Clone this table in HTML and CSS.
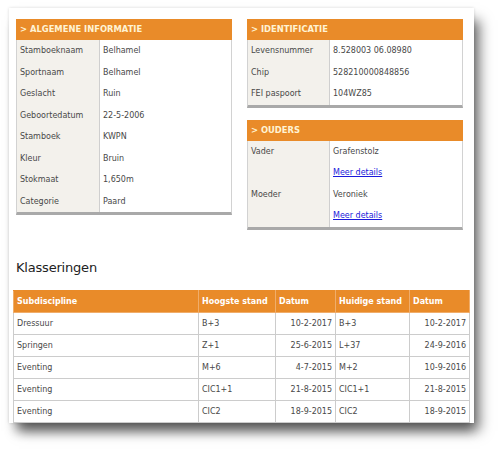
FILE: index.html
```html
<!DOCTYPE html>
<html lang="nl">
<head>
<meta charset="utf-8">
<title>Belhamel</title>
<link rel="stylesheet" href="styles.css">
</head>
<body>
<div class="paper">
  <div class="top">
    <div class="box box-left">
      <div class="box-head">&gt; ALGEMENE INFORMATIE</div>
      <div class="row"><div class="lbl">Stamboeknaam</div><div class="val">Belhamel</div></div>
      <div class="row"><div class="lbl">Sportnaam</div><div class="val">Belhamel</div></div>
      <div class="row"><div class="lbl">Geslacht</div><div class="val">Ruin</div></div>
      <div class="row"><div class="lbl">Geboortedatum</div><div class="val">22-5-2006</div></div>
      <div class="row"><div class="lbl">Stamboek</div><div class="val">KWPN</div></div>
      <div class="row"><div class="lbl">Kleur</div><div class="val">Bruin</div></div>
      <div class="row"><div class="lbl">Stokmaat</div><div class="val">1,650m</div></div>
      <div class="row"><div class="lbl">Categorie</div><div class="val">Paard</div></div>
    </div>
    <div class="col-right">
      <div class="box box-right">
        <div class="box-head">&gt; IDENTIFICATIE</div>
        <div class="row"><div class="lbl">Levensnummer</div><div class="val">8.528003 06.08980</div></div>
        <div class="row"><div class="lbl">Chip</div><div class="val">528210000848856</div></div>
        <div class="row"><div class="lbl">FEI paspoort</div><div class="val">104WZ85</div></div>
      </div>
      <div class="box box-right">
        <div class="box-head">&gt; OUDERS</div>
        <div class="row"><div class="lbl">Vader</div><div class="val"><div>Grafenstolz</div><div><a href="#">Meer details</a></div></div></div>
        <div class="row"><div class="lbl">Moeder</div><div class="val"><div>Veroniek</div><div><a href="#">Meer details</a></div></div></div>
      </div>
    </div>
  </div>
  <h2 class="title">Klasseringen</h2>
  <table class="klas">
    <colgroup>
      <col class="c1"><col class="c2"><col class="c3"><col class="c4"><col class="c5">
    </colgroup>
    <thead>
      <tr><th>Subdiscipline</th><th>Hoogste stand</th><th>Datum</th><th>Huidige stand</th><th>Datum</th></tr>
    </thead>
    <tbody>
      <tr><td>Dressuur</td><td>B+3</td><td class="num">10-2-2017</td><td>B+3</td><td class="num">10-2-2017</td></tr>
      <tr><td>Springen</td><td>Z+1</td><td class="num">25-6-2015</td><td>L+37</td><td class="num">24-9-2016</td></tr>
      <tr><td>Eventing</td><td>M+6</td><td class="num">4-7-2015</td><td>M+2</td><td class="num">10-9-2016</td></tr>
      <tr><td>Eventing</td><td>CIC1+1</td><td class="num">21-8-2015</td><td>CIC1+1</td><td class="num">21-8-2015</td></tr>
      <tr><td>Eventing</td><td>CIC2</td><td class="num">18-9-2015</td><td>CIC2</td><td class="num">18-9-2015</td></tr>
    </tbody>
  </table>
</div>
</body>
</html>
```

FILE: styles.css
```css
html, body {
  margin: 0;
  padding: 0;
  background: #ffffff;
}
body {
  font-family: "DejaVu Sans", Verdana, sans-serif;
  font-size: 8px;
  color: #484848;
  min-height: 451px;
  padding-bottom: 1px;
  box-sizing: border-box;
}
.paper {
  margin: 8px 0 0 9px;
  width: 465px;
  height: 415px;
  box-sizing: border-box;
  padding: 11px 11px 0 7px;
  background: #ffffff;
  box-shadow: 0 0 3px rgba(0,0,0,0.14), 8px 10px 12px -2px rgba(0,0,0,0.5), 2px 12px 10px -4px rgba(0,0,0,0.3);
}
.top {
  display: grid;
  grid-template-columns: 216px 216px;
  column-gap: 15px;
  align-items: start;
}
.col-right {
  display: flex;
  flex-direction: column;
  gap: 12px;
}
.box {
  border-left: 1px solid #d2d2d2;
  border-right: 1px solid #d2d2d2;
  border-bottom: 3px solid #a9a9a9;
  background: #ffffff;
}
.box-head {
  background: #e98b29;
  color: #fff3d4;
  font-weight: bold;
  font-size: 8.4px;
  height: 21px;
  line-height: 21px;
  margin: 0 -1px;
  padding-left: 4px;
}
.row {
  display: grid;
  grid-template-columns: 83px 1fr;
}
.box-right .row {
  grid-template-columns: 82px 1fr;
}
.lbl {
  background: #f3f1ec;
  border-right: 1px solid #cfcfcf;
  padding-left: 3px;
  line-height: 21.5px;
}
.val {
  padding-left: 3px;
  line-height: 21.5px;
}
.val a {
  color: #1a1adb;
  text-decoration: underline;
}
.title {
  margin: 30px 0 14px 0;
  font-size: 13px;
  line-height: 16px;
  font-weight: normal;
  color: #222;
  letter-spacing: -0.2px;
}
.klas {
  margin-left: -3px;
  width: 456px;
  border-collapse: collapse;
  table-layout: fixed;
}
.c1 { width: 185px; }
.c2 { width: 77px; }
.c3 { width: 60px; }
.c4 { width: 74px; }
.c5 { width: 60px; }
.klas th {
  background: #e98b29;
  color: #ffffff;
  font-weight: bold;
  text-align: left;
  height: 21px;
  padding: 0 3px;
  border: 1px solid #f0ad6a;
  border-top-color: #e98b29;
}
.klas td {
  height: 21px;
  padding: 0 3px;
  border: 1px solid #cccccc;
  white-space: nowrap;
}
.klas td.num {
  text-align: right;
}
```
